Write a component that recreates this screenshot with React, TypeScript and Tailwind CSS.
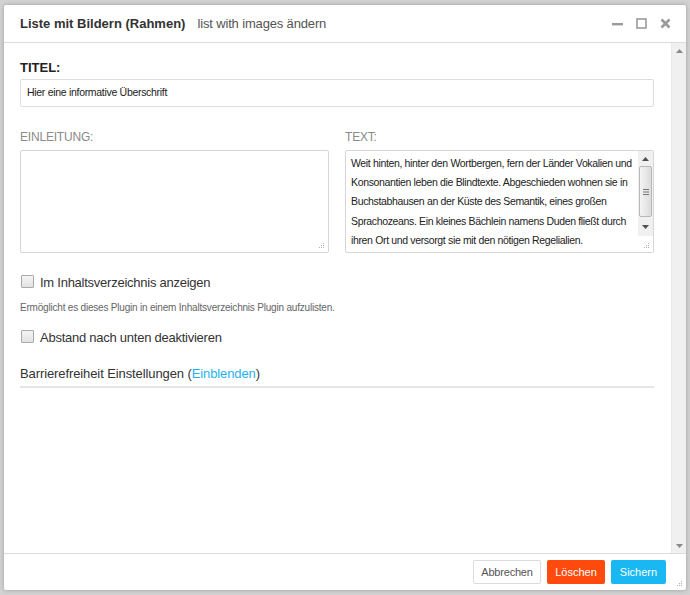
import React from "react";

const textLines = [
  "Weit hinten, hinter den Wortbergen, fern der Länder Vokalien und",
  "Konsonantien leben die Blindtexte. Abgeschieden wohnen sie in",
  "Buchstabhausen an der Küste des Semantik, eines großen",
  "Sprachozeans. Ein kleines Bächlein namens Duden fließt durch",
  "ihren Ort und versorgt sie mit den nötigen Regelialien.",
];

const Grip = () => (
  <svg width="7" height="7" viewBox="0 0 7 7" className="absolute right-[3px] bottom-[3px]">
    <rect x="5" y="1" width="1" height="1" fill="#b0b0b0" />
    <rect x="3" y="3" width="1" height="1" fill="#b0b0b0" />
    <rect x="5" y="3" width="1" height="1" fill="#b0b0b0" />
    <rect x="1" y="5" width="1" height="1" fill="#b0b0b0" />
    <rect x="3" y="5" width="1" height="1" fill="#b0b0b0" />
    <rect x="5" y="5" width="1" height="1" fill="#b0b0b0" />
  </svg>
);

const Checkbox = () => (
  <span className="inline-block w-[13px] h-[13px] border border-[#a9a9a9] bg-gradient-to-b from-[#f4f4f4] to-[#e2e2e2] rounded-[1px] shrink-0" />
);

export default function App() {
  return (
    <div
      className="w-[690px] h-[595px] bg-[#d2d2d2] pt-[5px] pl-[4px]"
      style={{ fontFamily: '"Liberation Sans", Arial, sans-serif' }}
    >
      <div className="w-[682px] h-[585px] bg-white flex flex-col shadow-[0_0_4px_rgba(0,0,0,0.25)] rounded-[2px] relative">
        {/* header */}
        <div className="h-[38px] border-b border-[#dcdcdc] flex items-center pl-[16px] pr-[15px] shrink-0">
          <span className="text-[13px] font-bold text-[#333]">Liste mit Bildern (Rahmen)</span>
          <span className="text-[13px] text-[#555] ml-[12px] tracking-[-0.15px]">list with images ändern</span>
          <div className="ml-auto flex items-center gap-[13px]">
            <svg width="11" height="11" viewBox="0 0 11 11">
              <rect x="0" y="5" width="11" height="2.4" fill="#9a9a9a" />
            </svg>
            <svg width="11" height="11" viewBox="0 0 11 11">
              <rect x="1" y="1" width="9" height="9" fill="none" stroke="#9a9a9a" strokeWidth="1.6" />
            </svg>
            <svg width="11" height="11" viewBox="0 0 11 11">
              <path d="M1.5 1.5 L9.5 9.5 M9.5 1.5 L1.5 9.5" stroke="#9a9a9a" strokeWidth="2.6" />
            </svg>
          </div>
        </div>

        {/* content */}
        <div className="flex-1 flex min-h-0">
          <div className="flex-1 pl-[16px] pr-[17px] pt-[17px]">
            <div className="text-[13px] font-bold text-[#222] leading-[15px]">TITEL:</div>
            <div className="mt-[4px] h-[28px] border border-[#dedede] rounded-[2px] flex items-center px-[6px] text-[10.5px] tracking-[-0.3px] text-[#222]">
              Hier eine informative Überschrift
            </div>

            <div className="mt-[23px] grid grid-cols-2 gap-[16px]">
              <div>
                <div className="text-[12px] text-[#8a8a8a] leading-[15px] tracking-[-0.2px]">EINLEITUNG:</div>
                <div className="mt-[5px] h-[103px] border border-[#d6d6d6] rounded-[2px] relative">
                  <Grip />
                </div>
              </div>
              <div>
                <div className="text-[12px] text-[#8a8a8a] leading-[15px] tracking-[-0.2px]">TEXT:</div>
                <div className="mt-[5px] h-[103px] border border-[#d6d6d6] rounded-[2px] relative flex overflow-hidden">
                  <div className="flex-1 pl-[5px] pt-[3px] text-[10.5px] tracking-[-0.35px] leading-[19.2px] text-[#222] whitespace-nowrap overflow-hidden">
                    {textLines.map((l) => (
                      <div key={l}>{l}</div>
                    ))}
                  </div>
                  <div className="w-[15px] flex flex-col shrink-0">
                    <div className="h-[85px] flex flex-col bg-[#f0f0f0]">
                      <div className="h-[15px] flex items-center justify-center">
                        <svg width="7" height="4" viewBox="0 0 7 4">
                          <path d="M0 4 L3.5 0 L7 4 Z" fill="#505050" />
                        </svg>
                      </div>
                      <div className="mx-[1px] h-[51px] bg-gradient-to-r from-[#f4f4f4] to-[#dcdcdc] border border-[#b8b8b8] rounded-[2px] flex items-center justify-center">
                        <svg width="6" height="6" viewBox="0 0 6 6">
                          <rect x="0" y="0" width="6" height="1" fill="#777" />
                          <rect x="0" y="2.5" width="6" height="1" fill="#777" />
                          <rect x="0" y="5" width="6" height="1" fill="#777" />
                        </svg>
                      </div>
                      <div className="flex-1 flex items-center justify-center">
                        <svg width="7" height="4" viewBox="0 0 7 4">
                          <path d="M0 0 L7 0 L3.5 4 Z" fill="#505050" />
                        </svg>
                      </div>
                    </div>
                    <div className="flex-1 bg-white" />
                  </div>
                  <Grip />
                </div>
              </div>
            </div>

            <div className="mt-[22px] flex items-center h-[16px]">
              <span className="ml-[1px]">
                <Checkbox />
              </span>
              <span className="ml-[6px] text-[13px] tracking-[-0.25px] text-[#333]">Im Inhaltsverzeichnis anzeigen</span>
            </div>
            <div className="mt-[11px] text-[10px] tracking-[-0.2px] leading-[12px] text-[#666]">
              Ermöglicht es dieses Plugin in einem Inhaltsverzeichnis Plugin aufzulisten.
            </div>
            <div className="mt-[16px] flex items-center h-[16px]">
              <span className="ml-[1px]">
                <Checkbox />
              </span>
              <span className="ml-[6px] text-[13px] tracking-[-0.25px] text-[#333]">Abstand nach unten deaktivieren</span>
            </div>
            <div className="mt-[20px] pb-[4px] border-b-2 border-[#e6e6e6] text-[13px] tracking-[-0.1px] leading-[16px] text-[#333]">
              Barrierefreiheit Einstellungen (<span className="text-[#1fb1ef]">Einblenden</span>)
            </div>
          </div>

          {/* outer scrollbar */}
          <div className="w-[15px] bg-[#f0f0f0] border-l border-[#e8e8e8] flex flex-col justify-between shrink-0">
            <div className="h-[15px] flex items-center justify-center">
              <svg width="7" height="4" viewBox="0 0 7 4">
                <path d="M0 4 L3.5 0 L7 4 Z" fill="#8a8a8a" />
              </svg>
            </div>
            <div className="h-[15px] flex items-center justify-center">
              <svg width="7" height="4" viewBox="0 0 7 4">
                <path d="M0 0 L7 0 L3.5 4 Z" fill="#8a8a8a" />
              </svg>
            </div>
          </div>
        </div>

        {/* footer */}
        <div className="h-[37px] border-t border-[#dcdcdc] flex justify-end items-start pt-[6px] pr-[20px] gap-[6px] shrink-0 relative">
          <button className="h-[24px] w-[68px] border border-[#dcdcdc] bg-white text-[#555] text-[11px] tracking-[-0.2px] rounded-[2px]">
            Abbrechen
          </button>
          <button className="h-[24px] w-[58px] bg-[#ff4a0d] text-white text-[11px] rounded-[2px]">
            Löschen
          </button>
          <button className="h-[24px] w-[55px] bg-[#1ab8f3] text-white text-[11px] rounded-[2px]">
            Sichern
          </button>
          <Grip />
        </div>
      </div>
    </div>
  );
}
